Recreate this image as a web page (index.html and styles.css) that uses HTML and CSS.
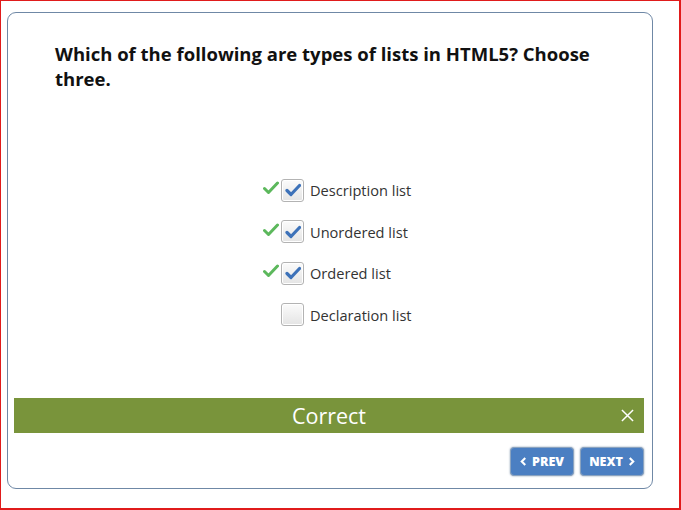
FILE: index.html
```html
<!DOCTYPE html>
<html>
<head>
<meta charset="utf-8">
<link rel="stylesheet" href="styles.css">
</head>
<body>
<div class="frame">
  <div class="card">
    <h1 class="question">Which of the following are types of lists in HTML5? Choose three.</h1>
    <ul class="options">
      <li class="option">
        <span class="mark"><svg viewBox="0 0 16 14" width="16" height="14"><path d="M1.5 7.5 L5.5 11.5 L14.5 2" fill="none" stroke="#5cb85c" stroke-width="3" stroke-linecap="round" stroke-linejoin="round"/></svg></span>
        <span class="box checked"><svg viewBox="0 0 16 14" width="16" height="14"><path d="M2 7.5 L6 11.5 L14.5 2.5" fill="none" stroke="#3d72b9" stroke-width="3.2" stroke-linecap="round" stroke-linejoin="round"/></svg></span>
        <span class="label">Description list</span>
      </li>
      <li class="option">
        <span class="mark"><svg viewBox="0 0 16 14" width="16" height="14"><path d="M1.5 7.5 L5.5 11.5 L14.5 2" fill="none" stroke="#5cb85c" stroke-width="3" stroke-linecap="round" stroke-linejoin="round"/></svg></span>
        <span class="box checked"><svg viewBox="0 0 16 14" width="16" height="14"><path d="M2 7.5 L6 11.5 L14.5 2.5" fill="none" stroke="#3d72b9" stroke-width="3.2" stroke-linecap="round" stroke-linejoin="round"/></svg></span>
        <span class="label">Unordered list</span>
      </li>
      <li class="option">
        <span class="mark"><svg viewBox="0 0 16 14" width="16" height="14"><path d="M1.5 7.5 L5.5 11.5 L14.5 2" fill="none" stroke="#5cb85c" stroke-width="3" stroke-linecap="round" stroke-linejoin="round"/></svg></span>
        <span class="box checked"><svg viewBox="0 0 16 14" width="16" height="14"><path d="M2 7.5 L6 11.5 L14.5 2.5" fill="none" stroke="#3d72b9" stroke-width="3.2" stroke-linecap="round" stroke-linejoin="round"/></svg></span>
        <span class="label">Ordered list</span>
      </li>
      <li class="option">
        <span class="mark"></span>
        <span class="box"></span>
        <span class="label">Declaration list</span>
      </li>
    </ul>
    <div class="feedback">
      <span class="feedback-text">Correct</span>
      <span class="close"><svg viewBox="0 0 14 14" width="13" height="13"><path d="M1 1 L13 13 M13 1 L1 13" stroke="#ffffff" stroke-width="1.6"/></svg></span>
    </div>
    <div class="nav">
      <button class="btn"><svg viewBox="0 0 8 10" width="7" height="9"><path d="M6 1 L2 5 L6 9" fill="none" stroke="#fff" stroke-width="2.4"/></svg>PREV</button>
      <button class="btn">NEXT<svg viewBox="0 0 8 10" width="7" height="9"><path d="M2 1 L6 5 L2 9" fill="none" stroke="#fff" stroke-width="2.4"/></svg></button>
    </div>
  </div>
</div>
</body>
</html>
```

FILE: styles.css
```css
html, body {
  margin: 0;
  padding: 0;
  background: #ffffff;
}
.frame {
  box-sizing: border-box;
  width: 681px;
  height: 510px;
  border: 2px solid #e01b1b;
  border-left-width: 1px;
  border-top-width: 1px;
  padding: 11px 0 0 6px;
  font-family: "Open Sans", "Liberation Sans", sans-serif;
}
.card {
  box-sizing: border-box;
  width: 646px;
  height: 477px;
  border: 1px solid #6f88a6;
  border-radius: 9px;
  display: flex;
  flex-direction: column;
}
.question {
  margin: 28px 30px 0 47px;
  font-size: 18.5px;
  line-height: 25px;
  font-weight: 700;
  color: #111111;
}
.options {
  list-style: none;
  margin: 88px 0 0 255px;
  padding: 0;
  display: flex;
  flex-direction: column;
  gap: 19.6px;
}
.option {
  display: flex;
  align-items: center;
  height: 22px;
}
.mark {
  width: 18px;
  height: 22px;
  display: flex;
  align-items: center;
  justify-content: flex-start;
}
.mark svg {
  margin-top: -4px;
}
.box {
  box-sizing: border-box;
  width: 23px;
  height: 23px;
  border: 1px solid #b3b3b3;
  border-radius: 3px;
  background: linear-gradient(#fbfbfb, #e4e4e4);
  box-shadow: inset 0 0 0 1px #ffffff;
  display: flex;
  align-items: center;
  justify-content: center;
}
.label {
  margin-left: 6px;
  font-size: 14.6px;
  color: #333333;
}
.feedback {
  margin: 72px 8px 0 6px;
  height: 35px;
  background: #79943b;
  display: flex;
  align-items: center;
  justify-content: center;
  position: relative;
}
.feedback-text {
  color: #ffffff;
  font-size: 21.5px;
}
.close {
  position: absolute;
  right: 10px;
  top: 11px;
  display: flex;
}
.nav {
  margin: 14px 8px 0 0;
  display: flex;
  justify-content: flex-end;
  gap: 6px;
}
.btn {
  box-sizing: border-box;
  width: 64px;
  height: 29px;
  border: 1px solid #8aa3c0;
  border-radius: 4px;
  background: #4b7fc2;
  box-shadow: 0 0 2px #7f93ab;
  color: #ffffff;
  font-family: "Open Sans", "Liberation Sans", sans-serif;
  font-weight: 800;
  font-size: 12.5px;
  display: flex;
  align-items: center;
  justify-content: center;
  gap: 5px;
  padding: 0;
}
```
